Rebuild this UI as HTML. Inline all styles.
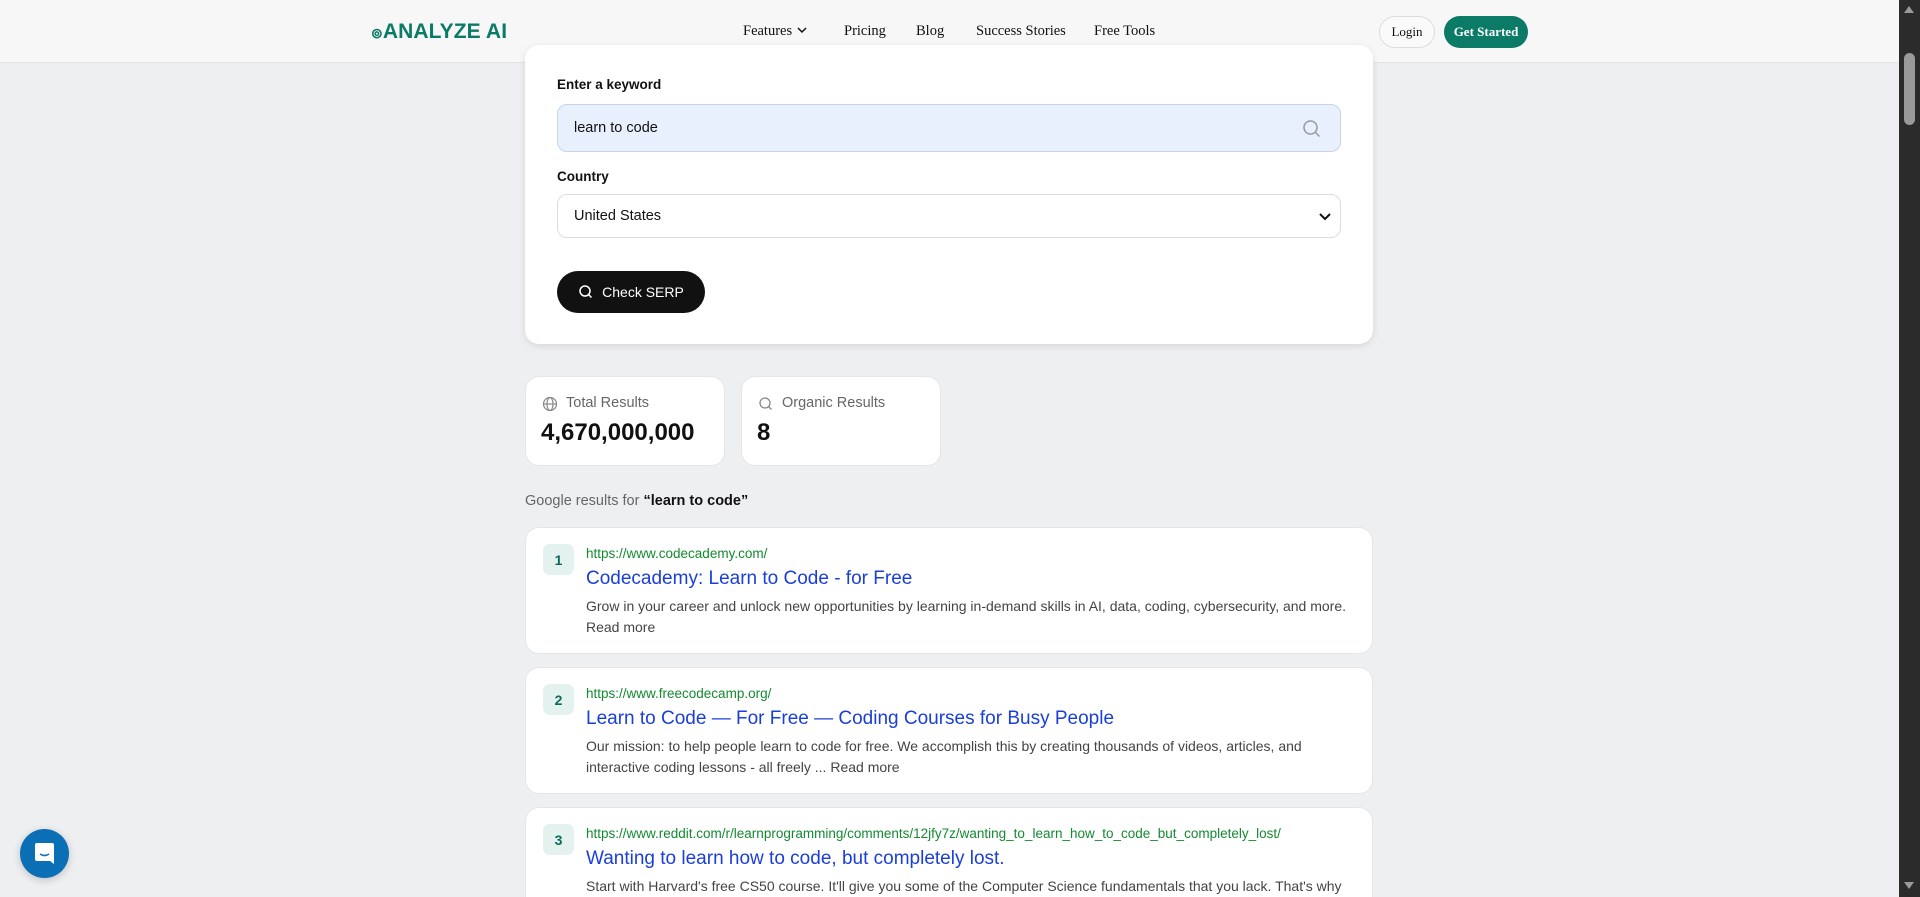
<!DOCTYPE html>
<html style="overflow:hidden;width:1920px;height:897px"><head><meta charset="utf-8"><style>
*{box-sizing:border-box;margin:0;padding:0}
body{width:1920px;height:897px;overflow:hidden;background:#eeeff1;font-family:"Liberation Sans",Arial,sans-serif;position:relative}
.nav{position:absolute;left:0;top:0;width:1899px;height:63px;background:#f7f7f7;border-bottom:1px solid #e5e5e5}
.logo{position:absolute;left:371px;top:20px;font-size:21px;font-weight:bold;color:#0b7a66;letter-spacing:0.1px}
.links{position:absolute;top:23px;font-family:"Liberation Serif",serif;font-size:14.5px;color:#111}
.links span{position:absolute;white-space:nowrap}
.btn{position:absolute;top:16px;height:32px;border-radius:16px;font-family:"Liberation Serif",serif;font-size:13px;display:flex;align-items:center;justify-content:center}
.card{position:absolute;background:#fff;border:1px solid #e3e5e8;border-radius:14px}
.form{left:525px;top:45px;width:848px;height:299px;box-shadow:0 2px 8px rgba(0,0,0,.1);border:none}
.lbl{position:absolute;left:32px;font-size:13.5px;font-weight:bold;color:#111}
.inp{position:absolute;left:32px;width:784px;border-radius:10px;font-size:14.5px;color:#111;display:flex;align-items:center;padding-left:16px}
.stat .t{position:absolute;left:40px;top:18px;font-size:14.5px;color:#666}
.stat .v{position:absolute;left:15px;top:42px;font-size:24px;font-weight:bold;color:#111}
.stat svg{position:absolute;left:16px;top:19px}
.res .n{position:absolute;left:17px;top:16px;width:31px;height:31px;border-radius:7px;background:#e4f2ef;color:#0b6b5a;font-size:14px;font-weight:bold;display:flex;align-items:center;justify-content:center}
.res .u{position:absolute;left:60px;top:18px;font-size:13.5px;color:#138a30;white-space:nowrap}
.res .h{position:absolute;left:60px;top:40px;font-size:19px;color:#1a3fd9;white-space:nowrap}
.res .d{position:absolute;left:60px;top:68px;width:780px;font-size:14px;line-height:21px;color:#444}
</style></head><body>
<div class="nav">
 <div class="logo"><span style="font-size:14px">⊚</span>ANALYZE AI</div>
 <div class="links">
  <span style="left:743px">Features <svg width="12" height="10" viewBox="0 0 12 10"><path d="M2 3l4 4 4-4" stroke="#111" stroke-width="1.5" fill="none"/></svg></span>
  <span style="left:844px">Pricing</span><span style="left:916px">Blog</span><span style="left:976px">Success Stories</span><span style="left:1094px">Free Tools</span>
 </div>
 <div class="btn" style="left:1379px;width:56px;border:1px solid #ddd;background:#fafafa;color:#111">Login</div>
 <div class="btn" style="left:1444px;width:84px;background:#0b7a66;color:#fff;font-weight:bold">Get Started</div>
</div>
<div class="card form">
 <div class="lbl" style="top:32px">Enter a keyword</div>
 <div class="inp" style="top:59px;height:48px;background:#e8f0fe;border:1px solid #c8d3e3">learn to code
  <svg style="position:absolute;right:18px;top:14px" width="20" height="20" viewBox="0 0 20 20"><circle cx="8.5" cy="8.5" r="6.5" stroke="#999" stroke-width="1.5" fill="none"/><path d="M13.5 13.5l4 4" stroke="#999" stroke-width="1.5"/></svg></div>
 <div class="lbl" style="top:124px">Country</div>
 <div class="inp" style="top:149px;height:44px;background:#fff;border:1px solid #ddd">United States
  <svg style="position:absolute;right:8px;top:16px" width="14" height="12" viewBox="0 0 14 12"><path d="M2 3l5 5 5-5" stroke="#111" stroke-width="2" fill="none"/></svg></div>
 <div style="position:absolute;left:32px;top:226px;width:148px;height:42px;border-radius:21px;background:#111;color:#fff;font-size:14px;display:flex;align-items:center;justify-content:center;gap:8px">
  <svg width="16" height="16" viewBox="0 0 16 16"><circle cx="7" cy="7" r="5" stroke="#fff" stroke-width="1.5" fill="none"/><path d="M10.5 10.5l3 3" stroke="#fff" stroke-width="1.5"/></svg>Check SERP</div>
</div>
<div class="card stat" style="left:525px;top:376px;width:200px;height:90px">
 <svg width="16" height="16" viewBox="0 0 16 16" fill="none" stroke="#888" stroke-width="1.2"><circle cx="8" cy="8" r="6.5"/><ellipse cx="8" cy="8" rx="3" ry="6.5"/><path d="M1.5 8h13"/></svg>
 <div class="t">Total Results</div><div class="v">4,670,000,000</div></div>
<div class="card stat" style="left:741px;top:376px;width:200px;height:90px">
 <svg width="16" height="16" viewBox="0 0 16 16"><circle cx="7" cy="7" r="5" stroke="#888" stroke-width="1.3" fill="none"/><path d="M10.5 10.5l3 3" stroke="#888" stroke-width="1.3"/></svg>
 <div class="t">Organic Results</div><div class="v">8</div></div>
<div style="position:absolute;left:525px;top:493px;font-size:14.5px;color:#666">Google results for <b style="color:#111">“learn to code”</b></div>
<div class="card res" style="left:525px;top:527px;width:848px;height:127px"><div class="n">1</div>
 <div class="u">https://www.codecademy.com/</div><div class="h">Codecademy: Learn to Code - for Free</div>
 <div class="d">Grow in your career and unlock new opportunities by learning in-demand skills in AI, data, coding, cybersecurity, and more. Read more</div></div>
<div class="card res" style="left:525px;top:667px;width:848px;height:127px"><div class="n">2</div>
 <div class="u">https://www.freecodecamp.org/</div><div class="h">Learn to Code — For Free — Coding Courses for Busy People</div>
 <div class="d">Our mission: to help people learn to code for free. We accomplish this by creating thousands of videos, articles, and interactive coding lessons - all freely ... Read more</div></div>
<div class="card res" style="left:525px;top:807px;width:848px;height:90px;border-bottom:none;border-radius:14px 14px 0 0"><div class="n">3</div>
 <div class="u">https://www.reddit.com/r/learnprogramming/comments/12jfy7z/wanting_to_learn_how_to_code_but_completely_lost/</div><div class="h">Wanting to learn how to code, but completely lost.</div>
 <div class="d" style="height:20px;overflow:hidden">Start with Harvard's free CS50 course. It'll give you some of the Computer Science fundamentals that you lack. That's why</div></div>
<div style="position:absolute;left:20px;top:829px;width:49px;height:49px;border-radius:50%;background:#0a6fb5;box-shadow:0 2px 8px rgba(0,0,0,.2)">
 <svg style="position:absolute;left:14px;top:13px" width="21" height="23" viewBox="0 0 21 23"><path d="M3 1h15a2 2 0 0 1 2 2v19l-4-3H3a2 2 0 0 1-2-2V3a2 2 0 0 1 2-2z" fill="#fff"/><path d="M6 12q4.5 3 9 0" stroke="#0a6fb5" stroke-width="1.6" fill="none"/></svg></div>
<div style="position:absolute;left:1899px;top:0;width:21px;height:897px;background:#2b2b2b">
 <div style="position:absolute;left:5px;top:53px;width:11px;height:72px;border-radius:6px;background:#9a9a9a"></div>
 <div style="position:absolute;left:5px;top:6px;width:0;height:0;border-left:5px solid transparent;border-right:5px solid transparent;border-bottom:7px solid #9a9a9a"></div>
 <div style="position:absolute;left:5px;top:882px;width:0;height:0;border-left:5px solid transparent;border-right:5px solid transparent;border-top:7px solid #9a9a9a"></div>
</div>
</body></html>
